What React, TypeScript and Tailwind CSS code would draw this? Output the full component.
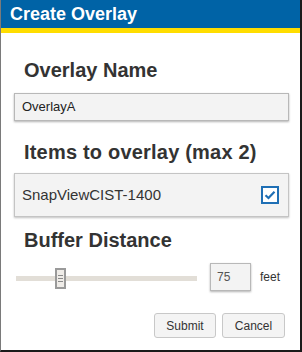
import React from "react";

export default function App() {
  const font = { fontFamily: '"Liberation Sans", Arial, sans-serif' };
  return (
    <div
      className="w-[302px] h-[352px] bg-white border-l border-l-[#7a7a7a] border-r-2 border-r-[#1a1a1a] border-b-2 border-b-[#1a1a1a] flex flex-col overflow-hidden"
      style={font}
    >
      <div className="h-[28px] pt-px bg-[#0063a6] text-white font-bold text-[18px] leading-[27px] pl-[9px]">
        Create Overlay
      </div>
      <div className="h-[5px] bg-[#ffdd00]" />
      <div className="flex flex-col pl-[13px]">
        <div className="mt-[26px] ml-[10px] text-[20px] leading-[23px] font-bold text-[#333333]">
          Overlay Name
        </div>
        <div className="mt-[11px] w-[275px] h-[28px] bg-[#f3f3f3] border border-[#b8b8b8] shadow-[0_1px_2px_rgba(0,0,0,0.3)] flex items-center pl-[7px] text-[13px] text-[#222]">
          OverlayA
        </div>
        <div className="mt-[20px] ml-[10px] text-[20px] leading-[23px] font-bold text-[#333333] tracking-[0.2px]">
          Items to overlay (max 2)
        </div>
        <div className="mt-[9px] w-[275px] h-[44px] bg-[#f3f3f3] border border-[#c4c4c4] shadow-[0_1px_2px_rgba(0,0,0,0.25)] flex items-center justify-between pl-[7px] pr-[9px] text-[15px] text-[#333]">
          <span>SnapViewCIST-1400</span>
          <span className="w-[18px] h-[18px] border-2 border-[#1f6fb5] bg-white flex items-center justify-center">
            <svg width="12" height="10" viewBox="0 0 12 10">
              <path d="M1.5 5.2 L4.5 8 L10.5 1.8" fill="none" stroke="#1f6fb5" strokeWidth="2.2" />
            </svg>
          </span>
        </div>
        <div className="mt-[12px] ml-[10px] text-[20px] leading-[23px] font-bold text-[#333333]">
          Buffer Distance
        </div>
        <div className="mt-[11px] h-[28px] flex items-start">
          <div className="relative ml-[2px] mt-[13px] w-[181px] h-[5px] bg-[#e2ded7]">
            <div className="absolute left-[39px] top-[-8px] w-[11px] h-[21px] bg-[#efece8] border-2 border-[#9a9a9a] flex flex-col items-center justify-center gap-[1.6px]">
              <div className="w-[5px] h-px bg-[#8a8a8a]" />
              <div className="w-[5px] h-px bg-[#8a8a8a]" />
              <div className="w-[5px] h-px bg-[#8a8a8a]" />
            </div>
          </div>
          <div className="ml-[13px] w-[41px] h-[28px] bg-[#f3f3f3] border border-[#b8b8b8] shadow-[0_1px_2px_rgba(0,0,0,0.3)] flex items-center pl-[6px] text-[12px] text-[#555]">
            75
          </div>
          <div className="ml-[9px] h-[28px] flex items-center text-[12px] text-[#333]">
            feet
          </div>
        </div>
        <div className="mt-[22px] ml-[140px] flex gap-[6px]">
          <button className="w-[62px] h-[25px] bg-[#f4f4f4] border border-[#c8c8c8] rounded-[3px] text-[12px] text-[#333] flex items-center justify-center">
            Submit
          </button>
          <button className="w-[63px] h-[25px] bg-[#f4f4f4] border border-[#c8c8c8] rounded-[3px] text-[12px] text-[#333] flex items-center justify-center">
            Cancel
          </button>
        </div>
      </div>
    </div>
  );
}
